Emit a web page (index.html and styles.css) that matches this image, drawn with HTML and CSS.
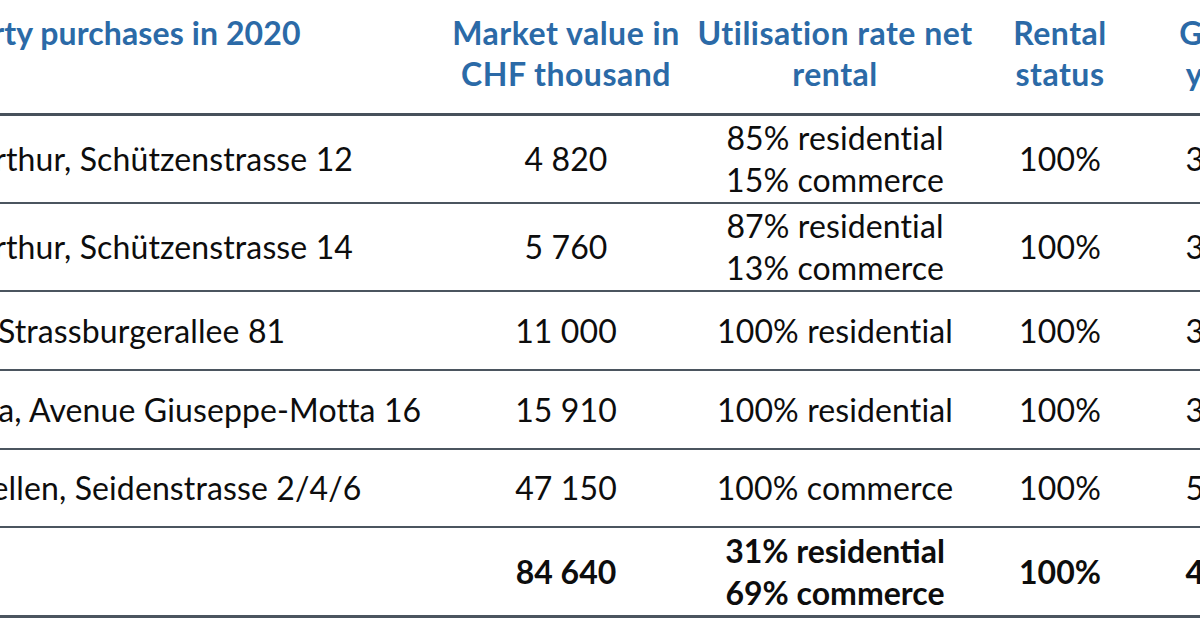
FILE: index.html
```html
<!DOCTYPE html>
<html lang="en">
<head>
<meta charset="utf-8">
<title>Property purchases in 2020</title>
<link rel="stylesheet" href="styles.css">
</head>
<body>
<div class="viewport">
  <table class="purchases">
    <colgroup>
      <col class="c-name">
      <col class="c-value">
      <col class="c-util">
      <col class="c-status">
      <col class="c-yield">
    </colgroup>
    <thead>
      <tr class="head">
        <th class="name">Property purchases in 2020</th>
        <th>Market value in<br>CHF thousand</th>
        <th>Utilisation rate net<br>rental</th>
        <th>Rental<br>status</th>
        <th>Gross<br>yield</th>
      </tr>
    </thead>
    <tbody>
      <tr class="two">
        <td class="name">Winterthur, Schützenstrasse 12</td>
        <td>4 820</td>
        <td>85% residential<br>15% commerce</td>
        <td>100%</td>
        <td>3.9%</td>
      </tr>
      <tr class="two">
        <td class="name">Winterthur, Schützenstrasse 14</td>
        <td>5 760</td>
        <td>87% residential<br>13% commerce</td>
        <td>100%</td>
        <td>3.8%</td>
      </tr>
      <tr class="one">
        <td class="name">Basel, Strassburgerallee 81</td>
        <td>11 000</td>
        <td>100% residential</td>
        <td>100%</td>
        <td>3.3%</td>
      </tr>
      <tr class="one">
        <td class="name">Geneva, Avenue Giuseppe-Motta 16</td>
        <td>15 910</td>
        <td>100% residential</td>
        <td>100%</td>
        <td>3.1%</td>
      </tr>
      <tr class="one last-plain">
        <td class="name">Wallisellen, Seidenstrasse 2/4/6</td>
        <td>47 150</td>
        <td>100% commerce</td>
        <td>100%</td>
        <td>5.0%</td>
      </tr>
      <tr class="total">
        <td class="name">Total</td>
        <td>84 640</td>
        <td>31% residential<br>69% commerce</td>
        <td>100%</td>
        <td>4.3%</td>
      </tr>
    </tbody>
  </table>
</div>
</body>
</html>
```

FILE: styles.css
```css
html, body {
  margin: 0;
  padding: 0;
  background: #ffffff;
}

body {
  width: 1200px;
  height: 630px;
  overflow: hidden;
  font-family: Lato, "Open Sans", "Liberation Sans", sans-serif;
  color: #0d0d0d;
}

.viewport {
  width: 1200px;
  height: 630px;
  overflow: hidden;
}

.purchases {
  margin-left: -93px;
  width: 1403px;
  table-layout: fixed;
  border-collapse: separate;
  border-spacing: 0;
  font-size: 32px;
  letter-spacing: 0.12px;
}

.c-name { width: 543px; }
.c-value { width: 232px; }
.c-util { width: 306px; }
.c-status { width: 144px; }
.c-yield { width: 178px; }

.purchases th,
.purchases td {
  padding: 0;
  text-align: center;
  white-space: nowrap;
}

.purchases .name {
  text-align: left;
}

.head th {
  color: #2b6aa7;
  font-weight: 700;
  letter-spacing: 0.5px;
  line-height: 41px;
  vertical-align: top;
  padding-top: 12px;
  border-bottom: 3px solid #47515b;
}

.head th.name {
  letter-spacing: 0.1px;
}

.head { height: 116px; }

.purchases td {
  line-height: 42px;
  vertical-align: middle;
  border-bottom: 2px solid #4b555f;
}

.two { height: 88px; }
.one { height: 79px; }
.last-plain { height: 78px; }

.total { height: 90px; }

.total td {
  font-weight: 700;
  letter-spacing: 0;
  border-bottom-width: 3px;
}
```
